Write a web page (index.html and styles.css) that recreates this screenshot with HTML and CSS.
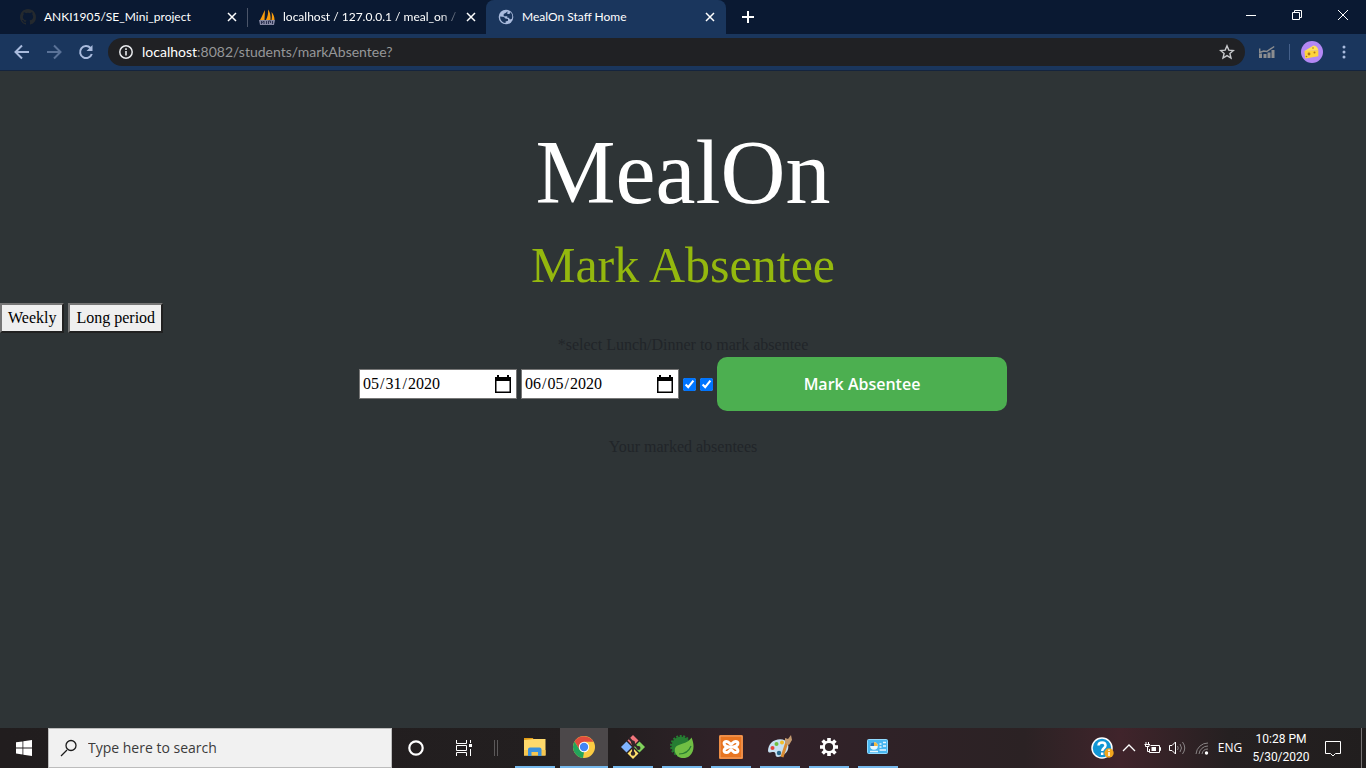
FILE: index.html
```html
<!DOCTYPE html>
<html lang="en">
<head>
<meta charset="utf-8">
<title>MealOn Staff Home</title>
<link rel="stylesheet" href="styles.css">
</head>
<body>
<div class="screen">
  <header class="tabstrip">
    <div class="tab tab-first">
      <svg class="favicon" viewBox="0 0 16 16"><path fill="#24292e" d="M8 0C3.580 0 0 3.580 0 8c0 3.540 2.290 6.530 5.470 7.590.4.070.55-.17.55-.38 0-.19-.01-.82-.01-1.490-2.010.370-2.530-.490-2.690-.940-.090-.230-.480-.940-.820-1.130-.280-.150-.680-.520-.010-.530.630-.010 1.080.580 1.230.820.720 1.210 1.870.870 2.330.660.070-.520.280-.870.510-1.070-1.780-.2-3.640-.890-3.640-3.950 0-.870.310-1.590.820-2.150-.080-.2-.360-1.020.080-2.120 0 0 .670-.210 2.200.820a7.400 7.400 0 0 1 4 0c1.530-1.040 2.200-.820 2.200-.820.440 1.100.160 1.920.080 2.120.510.560.820 1.270.820 2.150 0 3.070-1.870 3.750-3.650 3.950.290.250.540.730.540 1.480 0 1.070-.010 1.930-.010 2.200 0 .210.150.460.550.380A8 8 0 0 0 16 8c0-4.420-3.580-8-8-8z"/></svg>
      <span class="tab-title">ANKI1905/SE_Mini_project</span>
      <button class="tab-close" aria-label="Close tab"><svg width="10" height="10" viewBox="0 0 10 10"><path d="M1 1l8 8M9 1l-8 8"/></svg></button>
    </div>
    <div class="tab tab-second">
      <svg class="favicon" viewBox="0 0 16 16"><path fill="#f89c0e" d="M6 1L5.500 11H1C3 8 4 4 6 1zM9 .5c2 2 3 7 2.500 10.500H7C8.500 8 9.500 4 9 .5zM12.500 3c2 2 3 5 3 8h-3c.5-3 .5-5 0-8z"/><path fill="#8588a3" d="M0 11h16l-1 5H1z"/><path fill="none" stroke="#2b3150" d="M2.500 15v-3l1 1.500L5 12v3M7.500 15v-3M9.500 15v-3h2v2M13.500 15v-3"/></svg>
      <span class="tab-title tab-fade">localhost / 127.0.0.1 / meal_on / s</span>
      <button class="tab-close" aria-label="Close tab"><svg width="10" height="10" viewBox="0 0 10 10"><path d="M1 1l8 8M9 1l-8 8"/></svg></button>
    </div>
    <div class="tab tab-active">
      <svg class="favicon" viewBox="0 0 16 16"><circle cx="8" cy="8" r="7.300" fill="#a9bbdd"/><path fill="#1a365d" d="M9.500 2.200L8 3.800 5.700 5v2.200h3.600v1.500l1.500.1 1.200 1.700 1.900-.8c.9-2.500.2-5-1.600-6.400L11.500 5H9.300zM2.200 7.500c-.4 2.800 1.200 5.200 3.700 6.200l1.700.3v-1.500l2.400-.8v-1.600L7.400 9.600 6 8z"/></svg>
      <span class="tab-title">MealOn Staff Home</span>
      <button class="tab-close" aria-label="Close tab"><svg width="10" height="10" viewBox="0 0 10 10"><path d="M1 1l8 8M9 1l-8 8"/></svg></button>
    </div>
    <button class="new-tab" aria-label="New tab"><svg width="12" height="12" viewBox="0 0 12 12"><path d="M6 0v12M0 6h12"/></svg></button>
    <div class="window-controls">
      <button aria-label="Minimize"><svg width="10" height="10" viewBox="0 0 10 10"><path d="M0 5.500h10"/></svg></button>
      <button aria-label="Restore"><svg width="10" height="10" viewBox="0 0 10 10"><path d="M.5 2.500h7v7h-7zM2.500 2V.5h7v7H8"/></svg></button>
      <button aria-label="Close"><svg width="10" height="10" viewBox="0 0 10 10"><path d="M0 0l10 10M10 0L0 10"/></svg></button>
    </div>
  </header>

  <nav class="toolbar">
    <button class="tool stroked" aria-label="Back"><svg width="16" height="16" viewBox="0 0 16 16"><path d="M15 8H2M8 1.500L1.500 8 8 14.500"/></svg></button>
    <button class="tool stroked tool-dim" aria-label="Forward"><svg width="16" height="16" viewBox="0 0 16 16"><path d="M1 8h13M8 1.500L14.500 8 8 14.500"/></svg></button>
    <button class="tool stroked" aria-label="Reload"><svg width="16" height="16" viewBox="0 0 16 16"><path d="M13.800 10A6 6 0 1 1 12.500 4"/><path d="M14.500 1v6h-6z" class="solid"/></svg></button>
    <div class="omnibox">
      <svg width="16" height="16" viewBox="0 0 16 16"><circle cx="8" cy="8" r="6.200" fill="none" stroke="#e8eaed" stroke-width="1.500"/><path fill="#e8eaed" d="M7.200 7h1.600v4.500H7.200zM7.200 4.300h1.600v1.600H7.200z"/></svg>
      <div class="url"><b>localhost</b>:8082/students/markAbsentee?</div>
      <button class="star" aria-label="Bookmark this page"><svg width="16" height="16" viewBox="0 0 16 16"><path fill="none" stroke="#c8cacd" stroke-width="1.400" d="M8 1.800l1.800 4.300 4.600.4-3.500 3 1.100 4.500L8 11.600 4 14l1.100-4.500-3.500-3 4.600-.4z"/></svg></button>
    </div>
    <button class="tool" aria-label="Extension"><svg width="16" height="14" viewBox="0 0 16 14"><path fill="#8b8d90" d="M0 8.500h3V13H0zM4.500 9h3v4h-3zM8.500 7.500h3V13h-3zM12.500 5h3v8h-3z"/><path fill="none" stroke="#8b8d90" stroke-width="1.500" d="M.7 3.500v4l4-1.500 3 .5 7.500-5"/></svg></button>
    <span class="tool-divider"></span>
    <button class="tool" aria-label="Profile"><svg width="22" height="22" viewBox="0 0 22 22"><circle cx="11" cy="11" r="11" fill="#b388f5"/><path fill="#ffe354" d="M3.500 10L12.500 4.500c2.800.4 4.500 2 4.800 5z"/><path fill="#fdd43a" d="M3.500 10l13.800-.5v5.800L4.200 17.500z"/><g fill="#ad721f"><circle cx="8" cy="13" r="1.400"/><circle cx="13.500" cy="11.500" r="1"/><circle cx="12" cy="7" r=".8"/><circle cx="5.500" cy="15.500" r=".8"/></g></svg></button>
    <button class="tool" aria-label="Menu"><svg width="4" height="14" viewBox="0 0 4 14"><g fill="#a9bbdd"><circle cx="2" cy="2" r="1.500"/><circle cx="2" cy="7" r="1.500"/><circle cx="2" cy="12" r="1.500"/></g></svg></button>
  </nav>

  <main class="page">
    <h1 class="brand">MealOn</h1>
    <h2 class="subtitle">Mark Absentee</h2>
    <div class="modes">
      <button class="mode">Weekly</button>
      <button class="mode">Long period</button>
    </div>
    <p class="note">*select Lunch/Dinner to mark absentee</p>
    <form class="absence-form">
      <input class="date" type="date" value="2020-05-31" aria-label="From">
      <input class="date" type="date" value="2020-06-05" aria-label="To">
      <input class="meal" type="checkbox" aria-label="Lunch" checked>
      <input class="meal" type="checkbox" aria-label="Dinner" checked>
      <button class="submit" type="button">Mark Absentee</button>
    </form>
    <p class="marked">Your marked absentees</p>
  </main>

  <footer class="taskbar">
    <button class="start" aria-label="Start"><svg width="16" height="16" viewBox="0 0 16 16"><path fill="#fff" d="M0 2.300L6.500 1.400v6.100H0zM7.300 1.300L16 0v7.500H7.300zM0 8.400h6.500v6.100L0 13.600zM7.300 8.400H16V16l-8.700-1.300z"/></svg></button>
    <label class="search">
      <svg width="18" height="18" viewBox="0 0 18 18"><path fill="none" stroke="#1b1b1b" stroke-width="1.300" d="M7 11L1 17"/><circle cx="11" cy="6.500" r="5" fill="none" stroke="#1b1b1b" stroke-width="1.300"/></svg>
      <input type="text" placeholder="Type here to search" aria-label="Type here to search">
    </label>
    <button class="shell-button" aria-label="Cortana"><svg width="18" height="18" viewBox="0 0 18 18"><circle cx="9" cy="9" r="6.700" fill="none" stroke="#fff" stroke-width="2.200"/></svg></button>
    <button class="shell-button" aria-label="Task view"><svg width="18" height="16" viewBox="0 0 18 16"><path fill="none" stroke="#fff" d="M1.500 0v3.500h10V0M1.500 5.500h10v5h-10zM1.500 16v-3.500h10V16M15.500 0v3M15.500 9v7"/><path fill="#fff" d="M14 4h3v3h-3z"/></svg></button>
    <span class="grip"></span>
    <div class="apps">
      <button class="app" aria-label="File Explorer"><svg viewBox="0 0 24 24"><path fill="#e09b16" d="M1 3h9l1 3H1z"/><path fill="#ffda6c" d="M1 5l10-1h11.500v16.500H1z"/><path fill="#f6c64f" d="M1 15h21.500v5.500H1z"/><path fill="#3b91dd" d="M5 21v-6.500q0-2 2-2h9.500q2 0 2 2V21h-3.500v-4h-6.500v4z"/></svg></button>
      <button class="app app-current" aria-label="Google Chrome"><svg viewBox="0 0 24 24"><circle cx="12" cy="12" r="11" fill="#fbcb43"/><path fill="#e04b3d" d="M12 6.800h9.500A11 11 0 0 0 2.500 6.500l5 8z"/><path fill="#23a45b" d="M2.500 6.500L7.500 14.600 12 17l-1 6A11 11 0 0 1 2.500 6.500z"/><circle cx="12" cy="12" r="5.200" fill="#fff"/><circle cx="12" cy="12" r="4.200" fill="#4285f4"/></svg></button>
      <button class="app" aria-label="Git"><svg viewBox="0 0 24 24"><path fill="#f1757c" d="M12 0l5.500 5.500L12 11 6.500 5.500z"/><path fill="#80b3ff" d="M5.500 6.500L11 12l-5.500 5.500L0 12z"/><path fill="#80d35c" d="M18.500 6.500L24 12l-5.500 5.500L13 12z"/><path fill="#ffe06b" d="M12 13l5.500 5.500L12 24l-5.500-5.500z"/><path fill="none" stroke="#33262a" stroke-width="2" d="M8 3l4 4.500v11M12 8l5 5"/><g fill="#33262a"><circle cx="12" cy="7.500" r="2"/><circle cx="12" cy="18.500" r="2.200"/><circle cx="17.500" cy="13" r="2"/></g></svg></button>
      <button class="app" aria-label="Spring Tool Suite"><svg viewBox="0 0 24 24"><circle cx="11" cy="11" r="9.500" fill="#257d32"/><circle cx="11" cy="11" r="10" fill="none" stroke="#257d32" stroke-width="2" stroke-dasharray="2 1.500"/><path fill="#70bf44" d="M21.500 2.500c3 7 3 14-2 18.500-5 4-13 2-14.500-4C3 7 17 11 21.500 2.500z"/><path fill="none" stroke="#287c31" stroke-width="1.200" d="M9 19c5.500 0 10-3 12-8"/></svg></button>
      <button class="app" aria-label="XAMPP"><svg viewBox="0 0 24 24"><rect width="24" height="24" rx="1.500" fill="#e87521"/><rect x="1" y="1" width="22" height="22" fill="none" stroke="#f2a66c"/><path fill="none" stroke="#fff" stroke-width="3" stroke-linejoin="round" stroke-linecap="round" d="M9.500 12h5M9.500 12C4 10.500 4 6.500 7.500 6.500c2.500 0 2.500 2.500 4.500 2.500s2-2.500 4.500-2.500c3.500 0 3.500 4-2 5.500 5.500 1.500 5.500 5.500 2 5.500-2.500 0-2.500-2.500-4.500-2.500s-2 2.500-4.500 2.500C4 17.500 4 13.500 9.500 12z"/></svg></button>
      <button class="app" aria-label="Paint"><svg viewBox="0 0 24 24"><path fill="#c7e1f2" d="M3 8C8 3 18 3 20 9c2 7-4 12-10 13-4 0-1-4-4-5-3-.5-5 2-6-1 0-3 1-6 3-8z"/><circle cx="4.500" cy="13" r="2" fill="#e4433b"/><circle cx="8.500" cy="9" r="2" fill="#70bf40"/><circle cx="14" cy="7.500" r="2" fill="#f2bd29"/><circle cx="11" cy="18" r="2.200" fill="#28678b"/><path stroke="#d88b34" stroke-width="3" d="M14 22l5-15"/><path fill="#c49b70" d="M17 8l0-5 3 1 3-4 1 5-3 5z"/></svg></button>
      <button class="app" aria-label="Settings"><svg viewBox="0 0 24 24"><path stroke="#fff" stroke-width="3.600" d="M12 3v4M12 17v4M3 12h4M17 12h4M5.600 5.600l3 3M15.400 15.400l3 3M18.400 5.600l-3 3M8.600 15.400l-3 3"/><circle cx="12" cy="12" r="5.300" fill="#30262a" stroke="#fff" stroke-width="2.400"/></svg></button>
      <button class="app" aria-label="Control Panel"><svg viewBox="0 0 24 24"><rect x="1.500" y="4.500" width="20" height="14" rx="1" fill="#48b6f0" stroke="#91daff"/><circle cx="8" cy="11" r="3.800" fill="#e7f8ff"/><path fill="#f4b942" d="M8 11V7.200a3.800 3.800 0 0 1 3.800 3.800z"/><path fill="#2174bd" d="M8 11H4.200A3.800 3.800 0 0 1 8 7.200z"/><path stroke="#e7f8ff" stroke-width="1.300" d="M13.500 9h2M17 7.500h3M13.500 12h2M17 11h3M13.500 15h6.500M4 16.500h8"/></svg></button>
    </div>
    <div class="tray">
      <svg width="24" height="24" viewBox="0 0 24 24"><circle cx="12" cy="12" r="10" fill="#1296d5" stroke="#fff" stroke-width="1.500"/><path fill="none" stroke="#fff" stroke-width="2.500" d="M8.500 9.500c.3-4 7-4 7 0 0 2.500-3.300 2.500-3.300 5.500M12.200 16.500v2.500"/><circle cx="19" cy="17" r="4.700" fill="#f2a51d"/><path stroke="#fff" stroke-width="1.500" d="M19 16v4M19 13.500V15"/></svg>
      <svg width="14" height="8" viewBox="0 0 14 8"><path fill="none" stroke="#fff" stroke-width="1.300" d="M1 7l6-6 6 6"/></svg>
      <svg width="18" height="14" viewBox="0 0 18 14"><path fill="none" stroke="#fff" d="M6.500 4.500h9v7h-10V8M15.500 6.500h1v3h-1M2 1v2M4.500 1v2M.5 3.500h5.500M1.500 3.500v2h3.500v-2M3.500 6v4.500h2"/><path fill="#fff" d="M7.500 6H12v4H7.500z"/></svg>
      <svg width="18" height="14" viewBox="0 0 18 14"><path fill="none" stroke="#fff" d="M1.500 4.500H4L7.500 1v12L4 9.500H1.500z"/><path fill="none" stroke="#8a8586" d="M9.500 5q1.500 2 0 4M12 3q3 4 0 8M14.500 1q4.500 6 0 12"/></svg>
      <svg width="14" height="14" viewBox="0 0 14 14"><path fill="none" stroke="#8a8586" d="M1 13A12 12 0 0 1 13 2M4 13a9 9 0 0 1 9-8M7 13a6 6 0 0 1 6-5"/><circle cx="11.500" cy="12" r="1.700" fill="#fff"/></svg>
      <span class="language">ENG</span>
      <time class="clock" datetime="2020-05-30T22:28"><span>10:28 PM</span><span>5/30/2020</span></time>
      <svg width="16" height="18" viewBox="0 0 16 18"><path fill="none" stroke="#fff" d="M.5 2.500h15v12h-5L8 17l-2.500-2.500h-5z"/></svg>
    </div>
    <span class="show-desktop"></span>
  </footer>
</div>
</body>
</html>
```

FILE: styles.css
```css
* {
  box-sizing: border-box;
}

body {
  margin: 0;
  font-family: "Liberation Serif", "Times New Roman", serif;
  font-size: 16px;
  line-height: 24px;
  color: #212529;
  background: #2e3436;
}

button {
  padding: 0;
  border: 0;
  background: none;
  font: inherit;
}

h1, h2, p {
  margin: 0;
  font-weight: 400;
}

svg {
  display: block;
  flex: none;
}

.screen {
  display: flex;
  flex-direction: column;
  min-height: 100vh;
}

/* Browser tabs */
.tabstrip {
  display: flex;
  height: 34px;
  background: #0a1932;
  color: #fff;
  font: 12px/16px Lato, "Noto Sans", sans-serif;
}

.tab {
  display: flex;
  align-items: center;
  gap: 8px;
  min-width: 0;
  padding: 0 11px 0 12px;
}

.tab-first {
  flex: 0 0 247px;
  padding: 0 10px 0 20px;
}

.tab-second {
  flex: 0 0 239px;
  background: linear-gradient(#4b5569, #4b5569) 0 8px / 1px 19px no-repeat;
  padding-right: 10px;
}

.tab-active {
  flex: 0 0 240px;
  background: #1a365d;
  border-radius: 8px 8px 0 0;
}

.favicon {
  width: 16px;
  height: 16px;
}

.tab-title {
  flex: 1;
  min-width: 0;
  white-space: nowrap;
}

.tab-fade {
  mask-image: linear-gradient(to right, #000 90%, transparent 102%);
}

.tab-close {
  display: grid;
  place-items: center;
  width: 10px;
  height: 16px;
}

.tabstrip button path {
  fill: none;
  stroke: #fff;
}

.tab-close path {
  stroke-width: 1.5;
}

.new-tab {
  display: grid;
  place-items: center;
  width: 44px;
}

.new-tab path {
  stroke-width: 2;
}

.window-controls {
  display: flex;
  height: 29px;
  margin-left: auto;
}

.window-controls button {
  display: grid;
  place-items: center;
  width: 46px;
}

/* Address bar */
.toolbar {
  display: flex;
  align-items: center;
  height: 37px;
  padding: 0 6px;
  background: #1a365d;
  border-bottom: 1px solid #14243e;
}

.tool {
  display: grid;
  place-items: center;
  width: 32px;
  height: 32px;
}

.stroked path {
  fill: none;
  stroke: #a9bbdd;
  stroke-width: 2;
}

.stroked .solid {
  fill: #a9bbdd;
  stroke: none;
}

.tool-dim {
  opacity: 0.45;
}

.omnibox {
  display: flex;
  flex: 1;
  align-items: center;
  gap: 8px;
  height: 28px;
  margin: 0 6px;
  padding: 0 10px;
  border-radius: 14px;
  background: #202124;
  color: #969799;
  font: 14px/20px Lato, "Noto Sans", sans-serif;
}

.url {
  flex: 1;
}

.url b {
  font-weight: 400;
  color: #fff;
}

.tool-divider {
  width: 1px;
  height: 16px;
  margin: 0 6px;
  background: #44608a;
}

/* Page content */
.page {
  flex: 1;
  padding-top: 48px;
  text-align: center;
}

.brand {
  font-size: 90px;
  line-height: 108px;
  color: #fff;
}

.subtitle {
  margin: 8px 0;
  font-size: 50px;
  line-height: 60px;
  color: #94b80e;
}

.modes {
  display: flex;
  gap: 4px;
}

.mode {
  height: 30px;
  padding: 0 6px;
  border: 2px outset #767676;
  background: #efefef;
  color: #000;
}

.absence-form {
  display: flex;
  align-items: center;
  justify-content: center;
  gap: 4px;
}

.date {
  width: 158px;
  height: 30px;
  padding: 0 2px;
  border: 1px solid #767676;
  background: #fff;
  color: #000;
  font: inherit;
}

.date::-webkit-calendar-picker-indicator {
  width: 16px;
  height: 18px;
  padding: 0 3px 0 0;
  background: url("data:image/svg+xml,%3Csvg xmlns='http://www.w3.org/2000/svg' viewBox='0 0 16 18'%3E%3Cpath d='M0 2h2V0h2v2h8V0h2v2h2v16H0zM1.500 6v10.500h13V6z' fill-rule='evenodd'/%3E%3C/svg%3E") 0 0 / 16px 18px no-repeat;
  box-sizing: content-box;
}

.meal {
  width: 13px;
  height: 13px;
  margin: 0;
  accent-color: #0075ff;
}

.submit {
  width: 290px;
  height: 54px;
  border-radius: 10px;
  background: #4caf50;
  color: #fff;
  font-family: "Comic Sans MS", "Open Sans", sans-serif;
  font-weight: 600;
}

.marked {
  margin-top: 24px;
}

/* Desktop taskbar */
.taskbar {
  display: flex;
  height: 40px;
  background: linear-gradient(to right, #211d1e, #231f20 45%, #33222a 55%, #2b2224 75%, #40242b 82%, #252021 90%, #211e1e);
  color: #fff;
  font: 12px/18px "Open Sans", "Noto Sans", sans-serif;
}

.start,
.shell-button {
  display: grid;
  flex: 0 0 48px;
  place-items: center;
}

.search {
  display: flex;
  flex: 0 0 344px;
  align-items: center;
  gap: 10px;
  padding: 0 11px;
  border: 1px solid #bcbcbc;
  background: #f1f1f1;
}

.search input {
  flex: 1;
  min-width: 0;
  padding: 0;
  border: 0;
  background: none;
  font: 14px/20px "Open Sans", "Noto Sans", sans-serif;
}

.search input::placeholder {
  color: #3b3b3b;
}

.grip {
  width: 4px;
  height: 16px;
  margin: 12px 17px 0 6px;
  border: solid #5c595a;
  border-width: 0 1px;
}

.apps {
  display: flex;
  gap: 9px;
}

.app {
  display: grid;
  place-items: center;
  width: 40px;
  border-bottom: 2px solid #76b9ed;
}

.app svg {
  width: 24px;
  height: 24px;
}

.app-current {
  width: 48px;
  margin: 0 -4px;
  background: #4c484a;
}

.tray {
  display: grid;
  grid-template-columns: 28px 26px 22px 26px 24px 32px 70px 34px;
  place-items: center;
  margin-left: auto;
  padding-right: 11px;
}

.clock {
  display: grid;
  justify-items: center;
  font-family: Roboto, "Noto Sans", sans-serif;
  white-space: nowrap;
}

.show-desktop {
  width: 5px;
  border-left: 1px solid #777374;
}
```
